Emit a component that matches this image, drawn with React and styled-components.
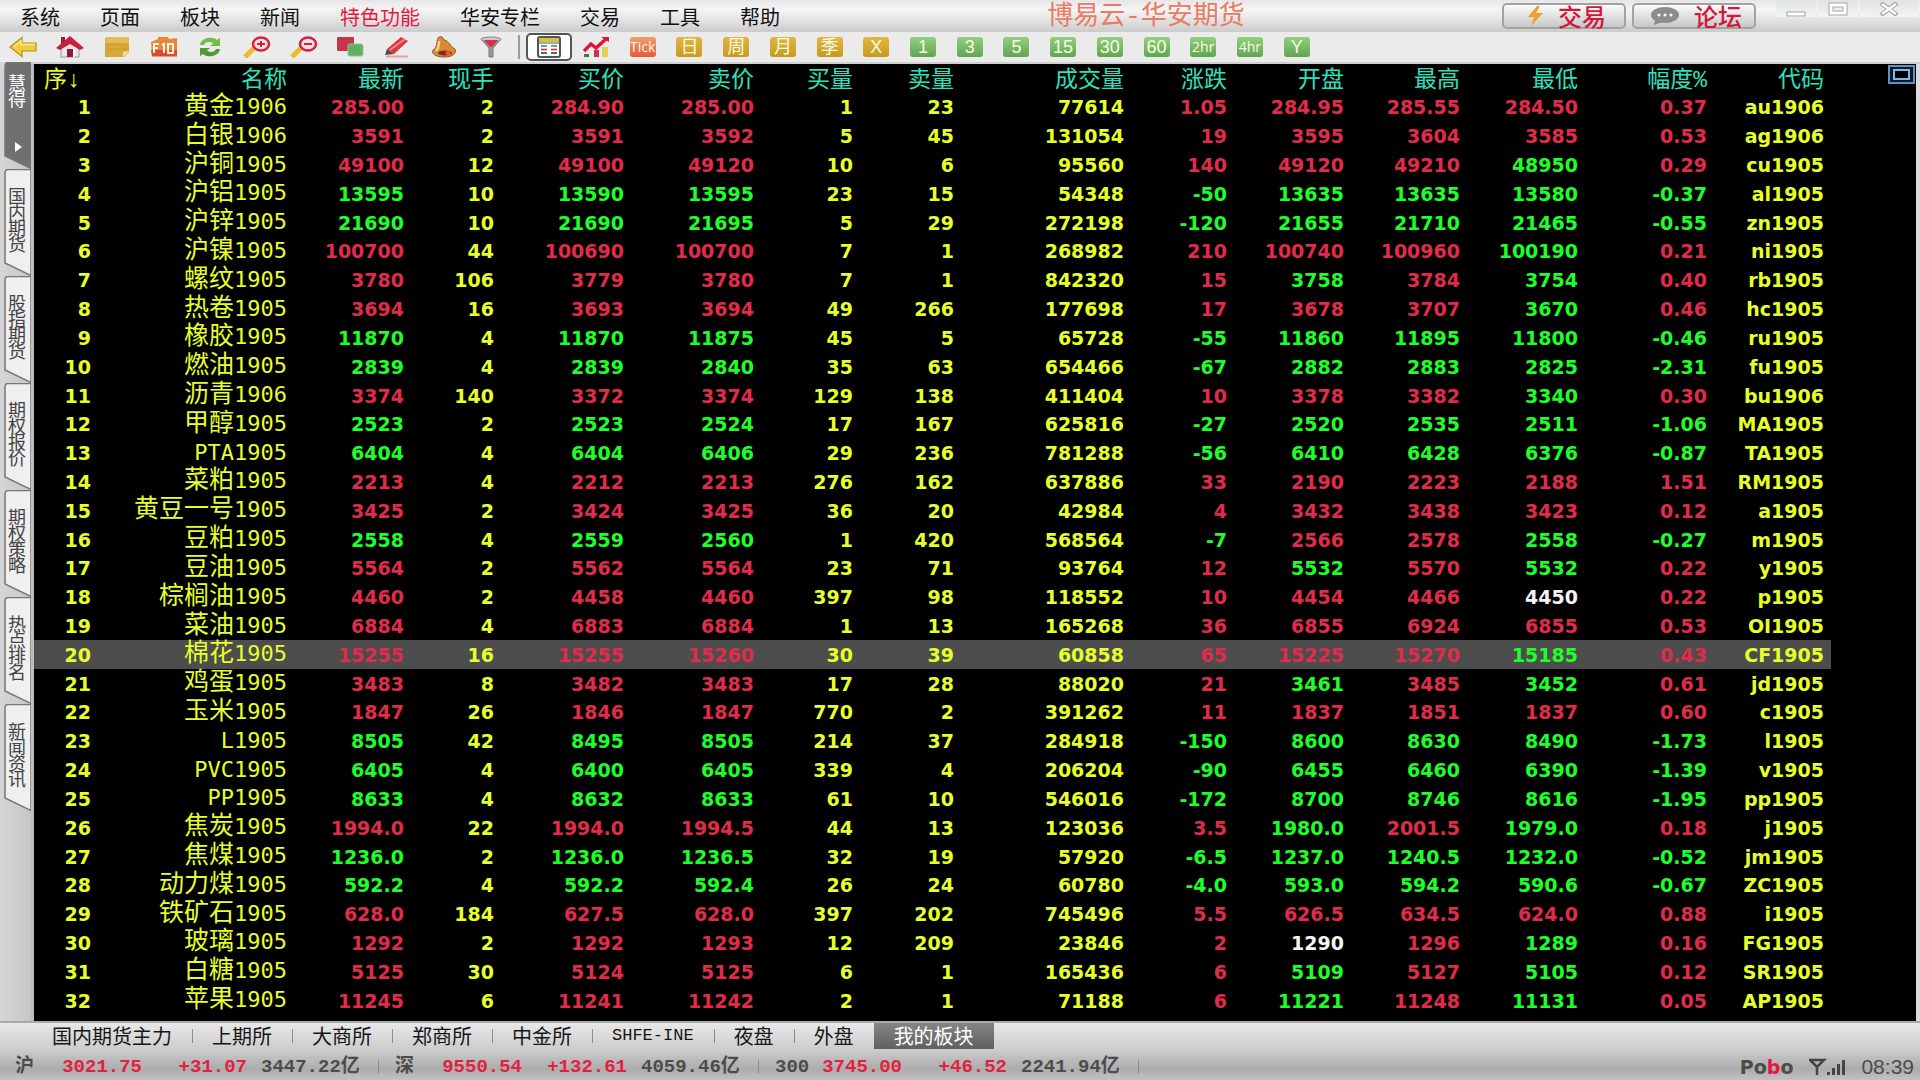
import React, { useState } from "react";
import styled, { createGlobalStyle, css } from "styled-components";

const colors = {
  y: "#e6ff2a",
  r: "#e02c4a",
  g: "#1eff2a",
  w: "#f4f4f4",
  c: "#2fe0bd",
};

const cjk = `"Noto Sans CJK SC", sans-serif`;

const GlobalStyle = createGlobalStyle`
  * { box-sizing: border-box; }
  body {
    margin: 0;
    background: #c9c9c9;
    font-family: "Liberation Mono", ${cjk};
  }
  button {
    margin: 0;
    padding: 0;
    border: 0;
    background: none;
    font: inherit;
    color: inherit;
    cursor: pointer;
  }
`;

const Page = styled.div`
  display: flex;
  flex-direction: column;
  height: 100vh;
  min-height: 1000px;
  overflow: hidden;
`;

/* ---------- title bar ---------- */
const TitleBar = styled.header`
  display: flex;
  height: 32px;
  background: linear-gradient(#e6e6e6, #f5f5f5 30%, #dedede 70%, #cbcbcb);
`;

const Menu = styled.nav`
  display: flex;
  align-items: center;
  gap: 40px;
  padding: 2px 10px 0 20px;
`;

const MenuItem = styled.button`
  font: 400 20px/30px ${cjk};
  white-space: nowrap;
  color: ${(p) => (p.$hot ? "#e8173f" : "#111")};
`;

const AppTitle = styled.h1`
  flex: 1;
  margin: 0;
  padding-top: 3px;
  font: 400 26px/29px "Liberation Mono", ${cjk};
  color: #ea7a63;
  text-align: center;
  white-space: nowrap;
`;

const TitleSide = styled.div`
  display: flex;
  align-items: flex-start;
`;

const LinkButton = styled.button`
  display: flex;
  align-items: center;
  justify-content: center;
  gap: 14px;
  width: 124px;
  height: 26px;
  margin: 3px 6px 0 0;
  padding-left: 4px;
  border: 2px solid #a2a2a2;
  border-radius: 5px;
  background: linear-gradient(#fbfbfb, #dcdcdc 60%, #c6c6c6);
  font: 500 24px/22px ${cjk};
  color: #d3173c;
`;

const WindowControls = styled.div`
  display: flex;
  margin-left: 14px;
`;

const WindowButton = styled.button`
  display: flex;
  align-items: center;
  justify-content: center;
  width: ${(p) => (p.$wide ? "58px" : "40px")};
  height: 17px;
  margin-right: 2px;
  background: linear-gradient(#dfe3e2, #f3f4f4);
`;

/* ---------- icon toolbar ---------- */
const Toolbar = styled.div`
  display: flex;
  align-items: center;
  height: 32px;
  background: #ebebeb;
  border-bottom: 2px solid #d0d0d0;
`;

const IconGroup = styled.div`
  display: grid;
  grid-auto-flow: column;
  grid-auto-columns: 1fr;
  width: ${(p) => p.$width};
`;

const IconButton = styled.button`
  display: flex;
  align-items: center;
  justify-content: center;
  height: 30px;
`;

const ActiveFrame = styled.span`
  display: flex;
  align-items: center;
  justify-content: center;
  flex: none;
  width: 46px;
  height: 28px;
  border: 2px solid #555;
  border-radius: 5px;
  background: #fff;
`;

const badgeTones = {
  orange: "linear-gradient(#f0a070, #e8583a)",
  gold: "linear-gradient(#dfb842, #c79a1c)",
  green: "linear-gradient(#92cf7e, #5fa651)",
};

const Badge = styled.span`
  display: block;
  flex: none;
  width: 26px;
  height: 20px;
  border-radius: 3px;
  background: ${(p) => badgeTones[p.$tone]};
  color: #fbfbe4;
  font: ${(p) => (p.$small ? "400 14px/20px" : "400 18px/20px")}
    ${(p) => (p.$small ? `"Open Sans"` : `"Liberation Sans"`)}, ${cjk};
  text-align: center;
  white-space: nowrap;
  overflow: hidden;
`;

const Divider = styled.span`
  width: 2px;
  height: 24px;
  margin: 0 6px 0 4px;
  background: #9c9c9c;
`;

/* ---------- middle ---------- */
const Middle = styled.div`
  display: flex;
  flex: 1;
  min-height: 0;
`;

const SideBar = styled.nav`
  flex: none;
  width: 31px;
  margin-top: -2px;
  padding-left: 4px;
  background: linear-gradient(90deg, #d6d6d6, #c6c6c6);
`;

const SideTab = styled.button`
  display: grid;
  width: 27px;
  height: 107px;
  color: ${(p) => (p.$active ? "#fff" : "#444")};
  > * { grid-area: 1 / 1; }
`;

const SideLabel = styled.span`
  width: 18px;
  margin: ${(p) => (p.$active ? "12px" : "18px")} 0 0 4px;
  justify-self: start;
  font: 400 18px/16px ${cjk};
  word-break: break-all;
`;

const Board = styled.main`
  display: flex;
  flex: 1;
  min-width: 0;
  padding-bottom: 6px;
  border-left: 3px solid #bdbdbd;
  background: #000;
`;

const QuoteTable = styled.table`
  flex: 1;
  height: 100%;
  min-width: 0;
  table-layout: fixed;
  border-collapse: collapse;
  font: 700 19px/22px "DejaVu Sans", ${cjk};
  color: ${colors.y};
`;

const HeadCell = styled.th`
  height: 29px;
  padding: 4px 7px 0 0;
  text-align: right;
  font: 400 23px/24px "Liberation Mono", ${cjk};
  color: ${(p) => colors[p.$c]};
  white-space: nowrap;
  ${(p) =>
    p.$first &&
    css`
      padding-left: 10px;
      text-align: left;
    `}
`;

const Row = styled.tr`
  background: ${(p) => (p.$selected ? "#4d4d4d" : "transparent")};
`;

const Cell = styled.td`
  padding: 0 7px 0 0;
  text-align: right;
  color: ${(p) => colors[p.$c || "y"]};
  white-space: nowrap;
`;

const NameCell = styled(Cell)`
  font: 400 25px/22px "Liberation Mono", ${cjk};
`;

const Contract = styled.span`
  font: 400 22px/22px "DejaVu Sans Mono", monospace;
`;

const BoardEdge = styled.div`
  display: flex;
  flex: none;
  align-items: flex-start;
  justify-content: flex-end;
  width: 85px;
  padding: 1px 1px 0 0;
`;

const RightRail = styled.div`
  flex: none;
  width: 4px;
  background: #dcdcdc;
`;

/* ---------- bottom ---------- */
const SectorTabs = styled.nav`
  display: flex;
  align-items: flex-start;
  height: 32px;
  padding-left: 32px;
  border-top: 2px solid #a9a9a9;
  background: linear-gradient(#e8e8e8, #c9c9c9);
`;

const SectorTab = styled.button`
  display: flex;
  align-items: center;
  height: 26px;
  padding: 0 20px;
  font: 400 20px/26px ${cjk};
  color: #161616;
  white-space: nowrap;
  ${(p) =>
    p.$latin &&
    css`
      font: 400 17px/26px "Liberation Mono", monospace;
    `}
  ${(p) =>
    p.$active &&
    css`
      background: linear-gradient(#868686, #5f5f5f);
      color: #fff;
    `}
`;

const Tick = styled.i`
  width: 1px;
  height: 14px;
  margin: 6px -1px 0 0;
  background: #8d8d8d;
`;

const StatusBar = styled.footer`
  display: flex;
  align-items: center;
  justify-content: space-between;
  height: 27px;
  padding: 1px 6px 0 0;
  background: linear-gradient(#c6c6c6, #acacac 60%, #c2c2c2);
  color: #4c4c4c;
`;

const Indexes = styled.div`
  display: flex;
`;

const IndexGroup = styled.div`
  display: grid;
  grid-template-columns: 38px 89px 105px 117px;
  align-items: center;
  width: 380px;
  height: 26px;
  padding-left: 15px;
  font: 700 19px/26px "Liberation Mono", ${cjk};
`;

const Num = styled.span`
  color: #e4203f;
  text-align: right;
`;

const Volume = styled.span`
  display: flex;
  align-items: center;
  justify-content: space-between;
  width: 118px;
  margin-left: 14px;
  &::after {
    content: "";
    width: 1px;
    height: 14px;
    background: #8d8d8d;
  }
`;

const StatusSide = styled.div`
  display: flex;
  align-items: center;
  gap: 16px;
`;

const Brand = styled.span`
  font: 700 19px/26px "DejaVu Sans", sans-serif;
  b { color: #e8173f; }
`;

const Clock = styled.time`
  font: 400 21px/26px "Liberation Sans", sans-serif;
`;

/* ---------- drawings ---------- */
const Svg = ({ w = 28, h = 22, box = "0 0 28 22", children }) => (
  <svg width={w} height={h} viewBox={box} fill="none" aria-hidden="true">
    {children}
  </svg>
);

const icons = {
  back: (
    <Svg>
      <path d="M1 11 13 1.500V7H27V15H13V20.500Z" fill="#f0cc35" stroke="#b98c1c" strokeWidth="1.200" />
      <path d="M5 10.500 12 5V8.500H26" stroke="#fbea90" strokeWidth="1.500" />
    </Svg>
  ),
  home: (
    <Svg>
      <path d="M5 10 14 4 23 10V21H5Z" fill="#e8e6e6" stroke="#9a9a9a" />
      <path d="M5 1H9V6L5 9Z" fill="#a51c36" />
      <path d="M0 12 14 0 28 12 24 14 14 8 4 14Z" fill="#c8203f" />
      <path d="M11 21V13H17V21Z" fill="#8b1d38" />
      <path d="M17 21V13H18.500V21Z" fill="#fff" />
    </Svg>
  ),
  note: (
    <Svg>
      <path d="M3 1H26V16L21 21H2V3Z" fill="#d9a736" />
      <path d="M3 1H26V7H2Z" fill="#e5bb55" />
      <path d="M4 8H24M4 13H24" stroke="#cc9a2c" />
      <path d="M26 15 20 21 20 16Z" fill="#f7e4ad" />
    </Svg>
  ),
  f10: (
    <Svg>
      <path d="M1 6 8 3 8 1H18L19 3 27 2V20H2Z" fill="#e8873c" />
      <path d="M1 14H27V20.500H2Z" fill="#e0492f" />
      <path d="M4 17V8H9M4 12H8M12 9 14 8V17M18 8H23V17H18Z" stroke="#fff4dc" strokeWidth="2" />
    </Svg>
  ),
  refresh: (
    <Svg>
      <path d="M4 9C5 1 17 0 21 4L24 2V10H14L17 7.500C14 5 9 6 8 9Z" fill="#72bd45" />
      <path d="M24 13C23 21 11 22 7 18L4 20V12H14L11 14.500C14 17 19 16 20 13Z" fill="#4f9c33" />
    </Svg>
  ),
  zoomIn: (
    <Svg>
      <path d="M2 21 11 12" stroke="#eebb28" strokeWidth="5" />
      <ellipse cx="18" cy="8" rx="8" ry="6.500" fill="#f7dfe2" stroke="#d6203f" strokeWidth="2.500" />
      <path d="M14 8H22M18 5V11" stroke="#d6203f" strokeWidth="2" />
    </Svg>
  ),
  zoomOut: (
    <Svg>
      <path d="M2 21 11 12" stroke="#eebb28" strokeWidth="5" />
      <ellipse cx="18" cy="8" rx="8" ry="6.500" fill="#f7dfe2" stroke="#d6203f" strokeWidth="2.500" />
      <path d="M14 8H22" stroke="#d6203f" strokeWidth="2" />
    </Svg>
  ),
  layers: (
    <Svg>
      <rect x="1" y="1" width="17" height="14" rx="1" fill="#c8344a" />
      <rect x="12" y="8" width="15" height="12" rx="2" fill="#62ad68" stroke="#8cc98e" />
    </Svg>
  ),
  pencil: (
    <Svg>
      <path d="M4 13 18 1 25 5 11 18Z" fill="#dc3544" />
      <path d="M7 14 22 3" stroke="#f38b7c" strokeWidth="2" />
      <path d="M4 13 11 18 2 19Z" fill="#5b4a44" />
      <path d="M3 20.500H25" stroke="#eaa0a0" strokeWidth="2" />
    </Svg>
  ),
  bell: (
    <Svg>
      <path d="M8 2C11 -1 14 2 14 4C20 5 19 10 25 13C27 17 23 21 15 21C6 21 1 18 3 14C8 11 6 6 8 2Z" fill="#d98b35" stroke="#8c5a28" />
      <path d="M9 5C9 10 8 13 6 15" stroke="#f9d38d" strokeWidth="2.500" />
      <ellipse cx="15" cy="17" rx="7" ry="2.500" fill="#7c2c20" />
      <circle cx="18" cy="17" r="2.500" fill="#e55a28" />
    </Svg>
  ),
  funnel: (
    <Svg>
      <path d="M4 3 12 12V21H16V12L24 3Z" fill="#9b9b9b" stroke="#777" />
      <ellipse cx="14" cy="3.500" rx="10" ry="2.500" fill="#c9c9c9" stroke="#888" />
      <path d="M7 4H21L15 11H13Z" fill="#dc2d48" />
    </Svg>
  ),
  grid: (
    <Svg>
      <rect x="3" y="1" width="22" height="20" rx="2" fill="#fff" stroke="#4b5862" strokeWidth="2" />
      <path d="M4 2H24V6H4Z" fill="#d5c23e" />
      <path d="M3 7H25" stroke="#4b5862" />
      <path d="M6 10H12M16 10H22" stroke="#2f8d50" strokeWidth="1.500" />
      <path d="M6 13.500H12M16 13.500H22" stroke="#d1233f" strokeWidth="1.500" />
      <path d="M6 17H12M16 17H22" stroke="#333" strokeWidth="1.500" />
    </Svg>
  ),
  chart: (
    <Svg>
      <path d="M2 18H7V21H2Z" fill="#3d7a38" />
      <path d="M12 14H17V21H12Z" fill="#d3304b" />
      <path d="M20 11H26V21H20Z" fill="#dfcf55" />
      <path d="M2 15 9 8 14 12 25 2" stroke="#d9183a" strokeWidth="3.500" />
      <path d="M19 1H27V6Z" fill="#d9183a" />
    </Svg>
  ),
};

const TabShape = ({ active }) => (
  <Svg w={27} h={107} box="0 0 27 107">
    <path
      d="M27 0.500H4Q1 0.500 1 4V94L27 106.500Z"
      fill={active ? "#707070" : "#efefef"}
      stroke="#777"
      strokeWidth="1.500"
    />
    {active && <path d="M11 80 18 85 11 90Z" fill="#fff" />}
  </Svg>
);

/* ---------- data ---------- */
const menu = ["系统", "页面", "板块", "新闻", "特色功能", "华安专栏", "交易", "工具", "帮助"];

const tools = [
  ["后退", "back"], ["首页", "home"], ["便笺", "note"], ["F10", "f10"], ["刷新", "refresh"],
  ["放大", "zoomIn"], ["缩小", "zoomOut"], ["叠加", "layers"], ["画线", "pencil"], ["预警", "bell"], ["筛选", "funnel"],
];

const periods = [
  ["Tick", "orange"], ["日", "gold"], ["周", "gold"], ["月", "gold"], ["季", "gold"], ["X", "gold"],
  ["1", "green"], ["3", "green"], ["5", "green"], ["15", "green"], ["30", "green"], ["60", "green"],
  ["2hr", "green"], ["4hr", "green"], ["Y", "green"],
];

const sideTabs = ["慧得", "国内期货", "股指期货", "期权报价", "期权策略", "热点排名", "新闻资讯"];

const columns = [
  ["序↓", 64], ["名称", 196], ["最新", 117], ["现手", 90], ["买价", 130], ["卖价", 130], ["买量", 99], ["卖量", 101],
  ["成交量", 170], ["涨跌", 103], ["开盘", 117], ["最高", 116], ["最低", 118], ["幅度%", 129], ["代码", 117],
];

/* name, contract, last, lots, bid, ask, bid volume, ask volume, volume, change,
   open, high, low, percent, code, colours of open/high/low */
const quotes = `
黄金 1906 285.00 2 284.90 285.00 1 23 77614 1.05 284.95 285.55 284.50 0.37 au1906 rrr
白银 1906 3591 2 3591 3592 5 45 131054 19 3595 3604 3585 0.53 ag1906 rrr
沪铜 1905 49100 12 49100 49120 10 6 95560 140 49120 49210 48950 0.29 cu1905 rrg
沪铝 1905 13595 10 13590 13595 23 15 54348 -50 13635 13635 13580 -0.37 al1905 ggg
沪锌 1905 21690 10 21690 21695 5 29 272198 -120 21655 21710 21465 -0.55 zn1905 ggg
沪镍 1905 100700 44 100690 100700 7 1 268982 210 100740 100960 100190 0.21 ni1905 rrg
螺纹 1905 3780 106 3779 3780 7 1 842320 15 3758 3784 3754 0.40 rb1905 grg
热卷 1905 3694 16 3693 3694 49 266 177698 17 3678 3707 3670 0.46 hc1905 rrg
橡胶 1905 11870 4 11870 11875 45 5 65728 -55 11860 11895 11800 -0.46 ru1905 ggg
燃油 1905 2839 4 2839 2840 35 63 654466 -67 2882 2883 2825 -2.31 fu1905 ggg
沥青 1906 3374 140 3372 3374 129 138 411404 10 3378 3382 3340 0.30 bu1906 rrg
甲醇 1905 2523 2 2523 2524 17 167 625816 -27 2520 2535 2511 -1.06 MA1905 ggg
_ PTA1905 6404 4 6404 6406 29 236 781288 -56 6410 6428 6376 -0.87 TA1905 ggg
菜粕 1905 2213 4 2212 2213 276 162 637886 33 2190 2223 2188 1.51 RM1905 rrr
黄豆一号 1905 3425 2 3424 3425 36 20 42984 4 3432 3438 3423 0.12 a1905 rrr
豆粕 1905 2558 4 2559 2560 1 420 568564 -7 2566 2578 2558 -0.27 m1905 rrg
豆油 1905 5564 2 5562 5564 23 71 93764 12 5532 5570 5532 0.22 y1905 grg
棕榈油 1905 4460 2 4458 4460 397 98 118552 10 4454 4466 4450 0.22 p1905 rrw
菜油 1905 6884 4 6883 6884 1 13 165268 36 6855 6924 6855 0.53 OI1905 rrr
棉花 1905 15255 16 15255 15260 30 39 60858 65 15225 15270 15185 0.43 CF1905 rrg
鸡蛋 1905 3483 8 3482 3483 17 28 88020 21 3461 3485 3452 0.61 jd1905 grg
玉米 1905 1847 26 1846 1847 770 2 391262 11 1837 1851 1837 0.60 c1905 rrr
_ L1905 8505 42 8495 8505 214 37 284918 -150 8600 8630 8490 -1.73 l1905 ggg
_ PVC1905 6405 4 6400 6405 339 4 206204 -90 6455 6460 6390 -1.39 v1905 ggg
_ PP1905 8633 4 8632 8633 61 10 546016 -172 8700 8746 8616 -1.95 pp1905 ggg
焦炭 1905 1994.0 22 1994.0 1994.5 44 13 123036 3.5 1980.0 2001.5 1979.0 0.18 j1905 grg
焦煤 1905 1236.0 2 1236.0 1236.5 32 19 57920 -6.5 1237.0 1240.5 1232.0 -0.52 jm1905 ggg
动力煤 1905 592.2 4 592.2 592.4 26 24 60780 -4.0 593.0 594.2 590.6 -0.67 ZC1905 ggg
铁矿石 1905 628.0 184 627.5 628.0 397 202 745496 5.5 626.5 634.5 624.0 0.88 i1905 rrr
玻璃 1905 1292 2 1292 1293 12 209 23846 2 1290 1296 1289 0.16 FG1905 wrg
白糖 1905 5125 30 5124 5125 6 1 165436 6 5109 5127 5105 0.12 SR1905 grg
苹果 1905 11245 6 11241 11242 2 1 71188 6 11221 11248 11131 0.05 AP1905 grg
`.trim().split("\n").map((line) => line.split(" "));

const sectors = ["国内期货主力", "上期所", "大商所", "郑商所", "中金所", "SHFE-INE", "夜盘", "外盘", "我的板块"];

const indexes = [
  ["沪", "3021.75", "+31.07", "3447.22亿"],
  ["深", "9550.54", "+132.61", "4059.46亿"],
  ["300", "3745.00", "+46.52", "2241.94亿"],
];

function QuoteRow({ index, data, selected, onSelect }) {
  const [name, contract, ...rest] = data;
  const values = rest.slice(0, 13);
  const marks = rest[13];
  const trend = values[7].startsWith("-") ? "g" : "r";
  const tone = [trend, "y", trend, trend, "y", "y", "y", trend, ...marks, trend, "y"];
  return (
    <Row $selected={selected} onClick={onSelect}>
      <Cell>{index + 1}</Cell>
      <NameCell>
        {name !== "_" && name}
        <Contract>{contract}</Contract>
      </NameCell>
      {values.map((v, i) => (
        <Cell key={i} $c={tone[i]}>{v}</Cell>
      ))}
    </Row>
  );
}

export default function App() {
  const [selected, setSelected] = useState(19);
  const [sector, setSector] = useState(8);
  return (
    <Page>
      <GlobalStyle />
      <TitleBar>
        <Menu>
          {menu.map((m) => (
            <MenuItem key={m} $hot={m === "特色功能"}>{m}</MenuItem>
          ))}
        </Menu>
        <AppTitle>博易云-华安期货</AppTitle>
        <TitleSide>
          <LinkButton>
            <Svg w={18} h={20} box="0 0 18 20">
              <path d="M11 0 2 11H8L5 20 17 7H10L14 0Z" fill="#eea02a" />
            </Svg>
            交易
          </LinkButton>
          <LinkButton>
            <Svg w={30} h={20} box="0 0 30 20">
              <ellipse cx="15" cy="9" rx="14" ry="8" fill="#8d8d8d" />
              <path d="M5 14 4 19 13 16Z" fill="#8d8d8d" />
              <circle cx="9" cy="9" r="1.500" fill="#fff" />
              <circle cx="15" cy="9" r="1.500" fill="#fff" />
              <circle cx="21" cy="9" r="1.500" fill="#fff" />
            </Svg>
            论坛
          </LinkButton>
          <WindowControls>
            <WindowButton aria-label="最小化">
              <Svg w={20} h={16} box="0 0 20 16">
                <rect x="1" y="11" width="18" height="4" fill="#fff" stroke="#a5a5a5" />
              </Svg>
            </WindowButton>
            <WindowButton aria-label="最大化">
              <Svg w={20} h={14} box="0 0 20 14">
                <rect x="1" y="1" width="18" height="12" fill="#fff" stroke="#a5a5a5" />
                <rect x="5" y="5" width="10" height="4" fill="#eee" stroke="#a5a5a5" />
              </Svg>
            </WindowButton>
            <WindowButton aria-label="关闭" $wide>
              <Svg w={20} h={14} box="0 0 20 14">
                <path d="M2 1 18 13M18 1 2 13" stroke="#a5a5a5" strokeWidth="4.500" />
                <path d="M3 2 17 12M17 2 3 12" stroke="#fff" strokeWidth="2.500" />
              </Svg>
            </WindowButton>
          </WindowControls>
        </TitleSide>
      </TitleBar>

      <Toolbar>
        <IconGroup $width="514px">
          {tools.map(([label, icon]) => (
            <IconButton key={icon} aria-label={label}>{icons[icon]}</IconButton>
          ))}
        </IconGroup>
        <Divider />
        <IconGroup $width="794px">
          <IconButton aria-label="报价"><ActiveFrame>{icons.grid}</ActiveFrame></IconButton>
          <IconButton aria-label="走势">{icons.chart}</IconButton>
          {periods.map(([label, tone]) => (
            <IconButton key={label}>
              <Badge $tone={tone} $small={label.length > 2}>{label}</Badge>
            </IconButton>
          ))}
        </IconGroup>
      </Toolbar>

      <Middle>
        <SideBar>
          {sideTabs.map((label, i) => (
            <SideTab key={label} $active={i === 0}>
              <TabShape active={i === 0} />
              <SideLabel $active={i === 0}>{label}</SideLabel>
            </SideTab>
          ))}
        </SideBar>
        <Board>
          <QuoteTable>
            <colgroup>
              {columns.map(([label, width]) => (
                <col key={label} style={{ width: `${(width / 1797) * 100}%` }} />
              ))}
            </colgroup>
            <thead>
              <tr>
                {columns.map(([label], i) => (
                  <HeadCell key={label} $first={i === 0} $c={i === 0 ? "y" : "c"}>{label}</HeadCell>
                ))}
              </tr>
            </thead>
            <tbody>
              {quotes.map((q, i) => (
                <QuoteRow
                  key={q[14]}
                  index={i}
                  data={q}
                  selected={i === selected}
                  onSelect={() => setSelected(i)}
                />
              ))}
            </tbody>
          </QuoteTable>
          <BoardEdge>
            <button aria-label="还原窗口">
              <Svg w={27} h={19} box="0 0 27 19">
                <rect x="1" y="1" width="25" height="17" fill="#0c1a2a" stroke="#5d92c4" strokeWidth="2" />
                <rect x="6" y="5" width="15" height="9" fill="#000" stroke="#86b4dc" strokeWidth="2" />
              </Svg>
            </button>
          </BoardEdge>
        </Board>
        <RightRail />
      </Middle>

      <SectorTabs>
        {sectors.map((s, i) => (
          <React.Fragment key={s}>
            {i > 0 && i < sectors.length - 1 && <Tick />}
            <SectorTab $latin={s === "SHFE-INE"} $active={i === sector} onClick={() => setSector(i)}>
              {s}
            </SectorTab>
          </React.Fragment>
        ))}
      </SectorTabs>

      <StatusBar>
        <Indexes>
          {indexes.map(([label, price, change, volume]) => (
            <IndexGroup key={label}>
              <span>{label}</span>
              <Num>{price}</Num>
              <Num>{change}</Num>
              <Volume>{volume}</Volume>
            </IndexGroup>
          ))}
        </Indexes>
        <StatusSide>
          <Brand>Po<b>b</b>o</Brand>
          <Svg w={36} h={18} box="0 0 36 18">
            <path d="M1 2H15L8 9ZM8 8V17" stroke="#444" strokeWidth="2.500" />
            <path d="M18 14H21V17H18ZM23 10H26V17H23ZM28 6H31V17H28ZM33 2H36V17H33Z" fill="#444" />
          </Svg>
          <Clock>08:39</Clock>
        </StatusSide>
      </StatusBar>
    </Page>
  );
}
